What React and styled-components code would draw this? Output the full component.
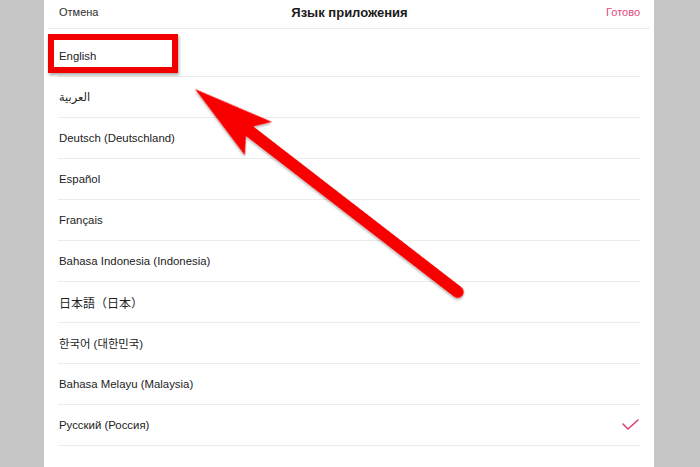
import React from 'react';
import styled, { createGlobalStyle } from 'styled-components';

const GlobalStyle = createGlobalStyle`
  html, body {
    margin: 0;
    padding: 0;
    background: #c6c6c6;
    font-family: 'Liberation Sans', 'DejaVu Sans', 'Noto Sans CJK JP', 'Noto Sans CJK KR', sans-serif;
  }
`;

const Page = styled.div`
  position: relative;
  width: 700px;
  height: 467px;
  overflow: hidden;
  background: #c6c6c6;
`;

const Panel = styled.div`
  margin-left: 44px;
  width: 610px;
  height: 467px;
  background: #ffffff;
  display: flex;
  flex-direction: column;
`;

const Header = styled.div`
  height: 28px;
  margin: 0 4px;
  padding: 0 10px 0 11px;
  display: flex;
  align-items: center;
  justify-content: space-between;
  border-bottom: 1px solid #ebebeb;
`;

const HeaderButton = styled.span`
  font-size: 11px;
  width: 60px;
  color: ${(p) => (p.accent ? '#dd4a78' : '#2e2e2e')};
  text-align: ${(p) => (p.accent ? 'right' : 'left')};
  margin-top: -4px;
`;

const Title = styled.span`
  font-size: 13px;
  font-weight: bold;
  color: #1a1a1a;
  margin-top: -4px;
`;

const List = styled.ul`
  list-style: none;
  margin: 0;
  padding: 7px 14px 0;
`;

const Row = styled.li`
  position: relative;
  height: 40px;
  display: flex;
  align-items: center;
  justify-content: space-between;
  padding-left: 1px;
  border-bottom: 1px solid #ebebeb;
  font-size: ${(p) => (p.cjk ? '12px' : '11.4px')};
  color: #222;
`;

const Highlight = styled.div`
  position: absolute;
  left: -10px;
  top: -2px;
  width: 118px;
  height: 27px;
  border: 6px solid #f20000;
  box-shadow: 1px 2px 3px rgba(0, 0, 0, 0.35);
`;

const Overlay = styled.svg`
  position: absolute;
  left: 0;
  top: 0;
  pointer-events: none;
`;

const languages = [
  { name: 'English', marked: true },
  { name: 'العربية' },
  { name: 'Deutsch (Deutschland)' },
  { name: 'Español' },
  { name: 'Français' },
  { name: 'Bahasa Indonesia (Indonesia)' },
  { name: '日本語（日本）', cjk: true },
  { name: '한국어 (대한민국)' },
  { name: 'Bahasa Melayu (Malaysia)' },
  { name: 'Русский (Россия)', selected: true },
];

const Check = () => (
  <svg width="17" height="12" viewBox="0 0 17 12" style={{ marginRight: 1 }}>
    <polyline points="1,5 6,10 16,1" fill="none" stroke="#d9456f" strokeWidth="1.6" strokeLinecap="round" strokeLinejoin="round" />
  </svg>
);

const Arrow = () => (
  <Overlay width="700" height="467">
    <defs>
      <filter id="sh" x="-10%" y="-10%" width="130%" height="130%">
        <feDropShadow dx="1" dy="1.5" stdDeviation="1" floodColor="#000" floodOpacity="0.3" />
      </filter>
    </defs>
    <g transform="translate(195 89) rotate(37.68)" fill="#f80000" filter="url(#sh)">
      <line x1="66" y1="0" x2="332" y2="0" stroke="#f80000" strokeWidth="12" strokeLinecap="round" />
      <polygon points="0,0 81,-21 69,-6 69,6 80,22" />
    </g>
  </Overlay>
);

const App = () => {
  return (
    <Page>
      <GlobalStyle />
      <Panel>
        <Header>
          <HeaderButton>Отмена</HeaderButton>
          <Title>Язык приложения</Title>
          <HeaderButton accent>Готово</HeaderButton>
        </Header>
        <List>
          {languages.map((l) => (
            <Row key={l.name} cjk={l.cjk}>
              {l.marked && <Highlight />}
              <span>{l.name}</span>
              {l.selected && <Check />}
            </Row>
          ))}
        </List>
      </Panel>
      <Arrow />
    </Page>
  );
};

export default App;
